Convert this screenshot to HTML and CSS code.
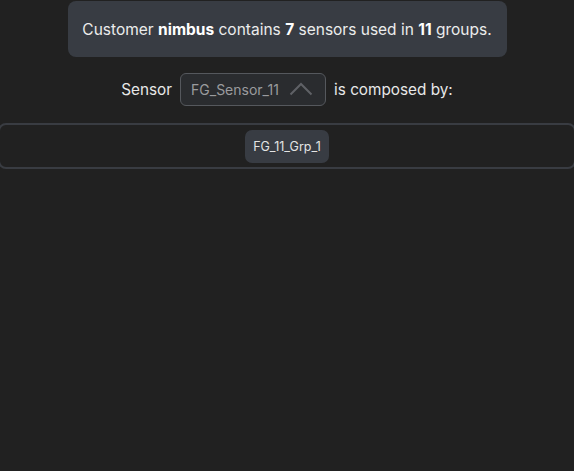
FILE: index.html
```html
<!DOCTYPE html>
<html>
<head>
<meta charset="utf-8">
<link rel="stylesheet" href="styles.css">
</head>
<body>
<div class="page">
  <div class="banner"><span>Customer <b>nimbus</b> contains <b>7</b> sensors used in <b>11</b> groups.</span></div>
  <div class="row">
    <span>Sensor</span>
    <div class="select">
      <span class="value">FG_Sensor_11</span>
      <svg class="chev" width="24" height="14" viewBox="0 0 24 14"><path d="M1.5 12.5 L12 2 L22.5 12.5" fill="none" stroke="#5f6166" stroke-width="2"/></svg>
    </div>
    <span>is composed by:</span>
  </div>
  <div class="groups">
    <div class="chip">FG_11_Grp_1</div>
  </div>
</div>
</body>
</html>
```

FILE: styles.css
```css
html, body {
  margin: 0;
  padding: 0;
  background: #212121;
  height: 100%;
}
body {
  font-family: Inter, "Noto Sans", sans-serif;
  color: #e6e6e6;
}
.page {
  display: flex;
  flex-direction: column;
  align-items: center;
  overflow: hidden;
}
.banner {
  margin-top: 1px;
  width: 439px;
  height: 56px;
  box-sizing: border-box;
  padding-top: 1px;
  background: #383c43;
  border-radius: 8px;
  display: flex;
  align-items: center;
  justify-content: center;
  font-size: 15.5px;
  color: #ececec;
}
.banner b { font-weight: 700; color: #fff; }
.row {
  margin-top: 16px;
  display: flex;
  align-items: center;
  gap: 8px;
  font-size: 15.3px;
  color: #e8e8e8;
}
.select {
  width: 146px;
  height: 33px;
  box-sizing: border-box;
  border: 1px solid #55585d;
  border-radius: 6px;
  background: #2a2c2f;
  display: flex;
  align-items: center;
  padding: 0 12px 0 10px;
  justify-content: space-between;
}
.value { font-size: 14px; color: #9a9b9e; }
.chev { display: block; margin-top: -1px; }
.groups {
  margin-top: 17px;
  width: 578px;
  height: 46px;
  box-sizing: border-box;
  border: 2px solid #393c42;
  border-radius: 8px;
  display: flex;
  justify-content: center;
  align-items: center;
}
.chip {
  background: #383c43;
  border-radius: 7px;
  height: 33px;
  padding: 0 8px;
  display: flex;
  align-items: center;
  font-size: 12.5px;
  color: #e4e4e4;
}
```
